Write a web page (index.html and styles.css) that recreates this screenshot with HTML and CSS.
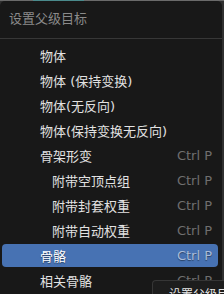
FILE: index.html
```html
<!DOCTYPE html>
<html lang="zh">
<head>
<meta charset="utf-8">
<link rel="stylesheet" href="styles.css">
</head>
<body>
<div class="backdrop"><span class="accent"></span></div>
<div class="menu">
  <div class="title">设置父级目标</div>
  <div class="sep"></div>
  <ul class="items">
    <li class="item"><span class="label">物体</span></li>
    <li class="item"><span class="label">物体 (保持变换)</span></li>
    <li class="item"><span class="label">物体(无反向)</span></li>
    <li class="item"><span class="label">物体(保持变换无反向)</span></li>
    <li class="item"><span class="label">骨架形变</span><span class="key">Ctrl P</span></li>
    <li class="item sub"><span class="label">附带空顶点组</span><span class="key">Ctrl P</span></li>
    <li class="item sub"><span class="label">附带封套权重</span><span class="key">Ctrl P</span></li>
    <li class="item sub"><span class="label">附带自动权重</span><span class="key">Ctrl P</span></li>
    <li class="item active"><span class="label">骨骼</span><span class="key">Ctrl P</span></li>
    <li class="item"><span class="label">相关骨骼</span><span class="key">Ctrl P</span></li>
  </ul>
</div>
<div class="tooltip">设置父级目标</div>
</body>
</html>
```
FILE: styles.css
```css
html, body {
  margin: 0;
  padding: 0;
  background: #303030;
  width: 224px;
  height: 294px;
  overflow: hidden;
  font-family: "DejaVu Sans", "Noto Sans CJK SC", sans-serif;
  font-size: 13px;
}
.backdrop {
  height: 1px;
  background: #6a6a6a;
  position: relative;
}
.accent {
  position: absolute;
  left: 33px;
  width: 51px;
  top: 0;
  height: 1px;
  background: #4a8a8c;
}
.menu {
  width: 222px;
  height: 293px;
  background: #181818;
  border-radius: 5px 5px 0 0;
  box-sizing: border-box;
  overflow: hidden;
}
.title {
  height: 36px;
  line-height: 36px;
  padding-left: 9px;
  color: #8a8a8a;
}
.sep {
  height: 1px;
  background: #373737;
  margin-top: 1px;
}
.items {
  list-style: none;
  margin: 0;
  padding: 5px 4px 0 2px;
  display: flex;
  flex-direction: column;
  gap: 2px;
}
.item {
  display: flex;
  align-items: center;
  justify-content: space-between;
  height: 23px;
  flex: none;
  padding: 0 6px 0 38px;
  color: #e2e2e2;
  border-radius: 4px;
}
.item.sub {
  padding-left: 50px;
}
.key {
  color: #6f6f6f;
}
.item.active {
  background: #4772b3;
  color: #ffffff;
  text-shadow: 0 1px 1px rgba(0,0,0,0.45);
}
.item.active .key {
  color: #a9bcd9;
}
.tooltip {
  position: absolute;
  left: 152px;
  top: 280px;
  width: 72px;
  height: 14px;
  background: #1d1d1d;
  border: 1px solid #363636;
  border-bottom: none;
  border-right: none;
  border-radius: 4px 0 0 0;
  color: #e6e6e6;
  padding: 7px 0 0 16px;
  box-sizing: border-box;
  font-size: 12px;
  line-height: 14px;
  overflow: hidden;
  white-space: nowrap;
}
```
